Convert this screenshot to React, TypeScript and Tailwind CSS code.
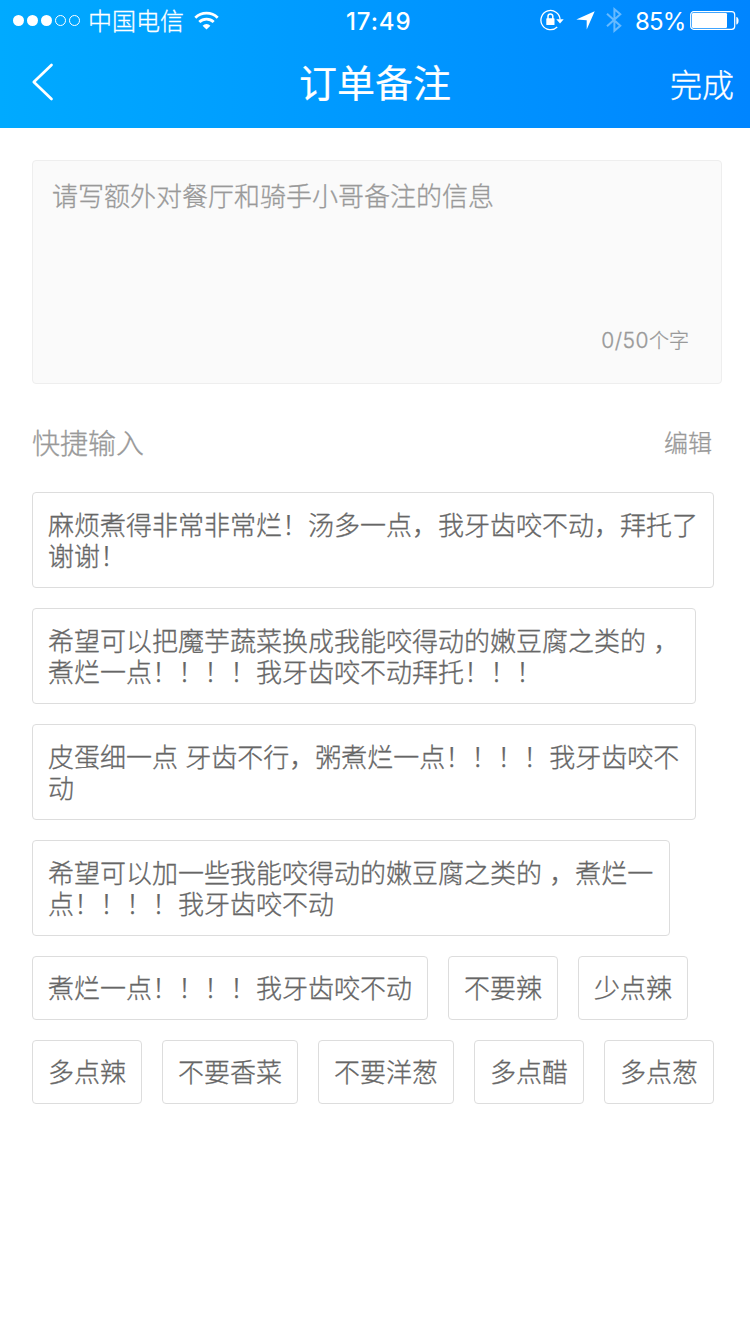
type Note = { lines: string[]; width?: string };

const notes: Note[] = [
  { lines: ["麻烦煮得非常非常烂！汤多一点，我牙齿咬不动，拜托了", "谢谢！"], width: "w-[682px]" },
  { lines: ["希望可以把魔芋蔬菜换成我能咬得动的嫩豆腐之类的 ，", "煮烂一点！！！！我牙齿咬不动拜托！！！"], width: "w-[664px]" },
  { lines: ["皮蛋细一点 牙齿不行，粥煮烂一点！！！！我牙齿咬不", "动"], width: "w-[664px]" },
  { lines: ["希望可以加一些我能咬得动的嫩豆腐之类的 ，煮烂一", "点！！！！我牙齿咬不动"], width: "w-[638px]" },
  { lines: ["煮烂一点！！！！我牙齿咬不动"] },
  { lines: ["不要辣"] },
  { lines: ["少点辣"] },
  { lines: ["多点辣"] },
  { lines: ["不要香菜"] },
  { lines: ["不要洋葱"] },
  { lines: ["多点醋"] },
  { lines: ["多点葱"] },
];

function StatusBar() {
  return (
    <div className="flex h-10 items-center pl-[13px]">
      <svg className="block h-5 w-[68px] shrink-0" viewBox="0 0 68 20" fill="white">
        <circle cx="5.5" cy="10.5" r="5.5" />
        <circle cx="19.5" cy="10.5" r="5.5" />
        <circle cx="33.5" cy="10.5" r="5.5" />
        <circle cx="47.5" cy="10.5" r="5" fill="none" stroke="white" />
        <circle cx="61.5" cy="10.5" r="5" fill="none" stroke="white" />
      </svg>
      <span className="ml-[7px] w-24 whitespace-nowrap text-[24px] leading-10">中国电信</span>
      <svg className="ml-[10px] h-[19px] w-[25px] shrink-0" viewBox="0 0 25 19" fill="none" stroke="white" strokeWidth="2.8">
        <path d="M1.3 6.7a16.2 16.2 0 0 1 22.4 0M5.3 11a10.3 10.3 0 0 1 14.4 0" />
        <path d="M12.5 18.6l-3.9-3.9a5.6 5.6 0 0 1 7.8 0z" fill="white" stroke="none" />
      </svg>
      <span className="ml-[127px] w-[66px] whitespace-nowrap pt-[3px] font-[Inter] text-[24px] leading-[38px] font-medium tracking-[0.9px] [-webkit-text-stroke:0px]">17:49</span>
      <svg className="ml-[128px] h-[22px] w-6 shrink-0" viewBox="0 0 24 22" fill="none" stroke="white" strokeWidth="1.3">
        <path d="M17.2 18A9.6 9.6 0 1 1 20.1 10.5" />
        <path d="M16.3 10.2h7.4L20 14.5z" fill="white" stroke="none" />
        <rect x="6.3" y="9.3" width="8.2" height="6.7" rx=".6" fill="white" stroke="none" />
        <path d="M8 10V7.3a2.4 2.4 0 0 1 4.8 0V10" strokeWidth="1.5" />
      </svg>
      <svg className="ml-3 h-[19px] w-[19px] shrink-0" viewBox="0 0 19 19" fill="white">
        <path d="M18.7 .3L10.7 18.5V9.2L.3 8.5z" />
      </svg>
      <svg className="ml-[11px] h-[26px] w-4 shrink-0 opacity-40" viewBox="0 0 16 26" fill="none" stroke="white" strokeWidth="2">
        <path d="M1 6.8l13.3 12-5.9 5V2.2l5.9 5L1 19.2" />
      </svg>
      <span className="ml-[13px] w-[50px] whitespace-nowrap pt-[3px] font-[Inter] text-[24px] leading-[38px] font-normal tracking-[-0.9px] [-webkit-text-stroke:0px]">85%</span>
      <svg className="ml-[5px] h-5 w-[50px] shrink-0" viewBox="0 0 50 20" fill="none">
        <rect x=".7" y="1.7" width="44" height="17.6" rx="3" stroke="white" strokeWidth="1.2" />
        <rect x="2" y="3" width="35" height="15" rx="1.2" fill="white" />
        <path d="M46.3 7v7.500c3 0 3-7.5 0-7.500z" fill="white" />
      </svg>
    </div>
  );
}

function Header() {
  return (
    <header className="h-32 bg-linear-to-r from-[#00aaff] to-[#0085ff] text-white">
      <StatusBar />
      <div className="grid h-[88px] grid-cols-[1fr_auto_1fr] items-center">
        <svg className="mb-1 ml-[31px] h-10 w-6" viewBox="0 0 24 40" fill="none" stroke="white" strokeWidth="2.7" strokeLinecap="round" strokeLinejoin="round">
          <path d="M20.5 3L2.8 20l17.7 17" />
        </svg>
        <h1 className="mb-[6px] text-[38px] leading-[60px] font-normal [-webkit-text-stroke:0.2px]">订单备注</h1>
        <button className="mb-[2px] justify-self-end pr-4 text-[32px] leading-[60px] font-light">完成</button>
      </div>
    </header>
  );
}

function NoteButton({ lines, width = "" }: Note) {
  const height = lines.length > 1 ? "h-24 pb-[3px]" : "h-16 pb-[4px]";
  return (
    <button className={`block rounded-[4px] border border-[#ddd] px-[15px] text-left text-[26px] leading-[31px] whitespace-nowrap text-[#666] [word-spacing:1.5px] ${height} ${width}`}>
      {lines.map((line) => (
        <span className="block" key={line}>{line}</span>
      ))}
    </button>
  );
}

export default function App() {
  return (
    <div className="min-h-[1334px] w-[750px] bg-white font-['Noto_Sans_CJK_SC',sans-serif] font-light [-webkit-text-stroke:0.3px]">
      <Header />
      <main className="pt-8 pr-7 pl-8">
        <div className="flex h-56 flex-col justify-between rounded-[4px] border border-[#eee] bg-[#fafafa] pt-[14px] pr-8 pb-[26px] pl-[19px] text-[#999]">
          <p className="text-[26px] leading-10">请写额外对餐厅和骑手小哥备注的信息</p>
          <p className="text-right text-[20px] leading-[32px]"><span className="font-[Inter] text-[21px] font-light tracking-[0.5px]">0/50</span>个字</p>
        </div>
        <div className="flex h-[108px] items-center justify-between pt-[8px] pr-[10px] text-[#999]">
          <h2 className="text-[28px] leading-10 font-light">快捷输入</h2>
          <button className="text-[24px] leading-10 font-light">编辑</button>
        </div>
        <div className="flex w-[684px] flex-wrap gap-5">
          {notes.map((note) => (
            <NoteButton key={note.lines[0]} {...note} />
          ))}
        </div>
      </main>
    </div>
  );
}
